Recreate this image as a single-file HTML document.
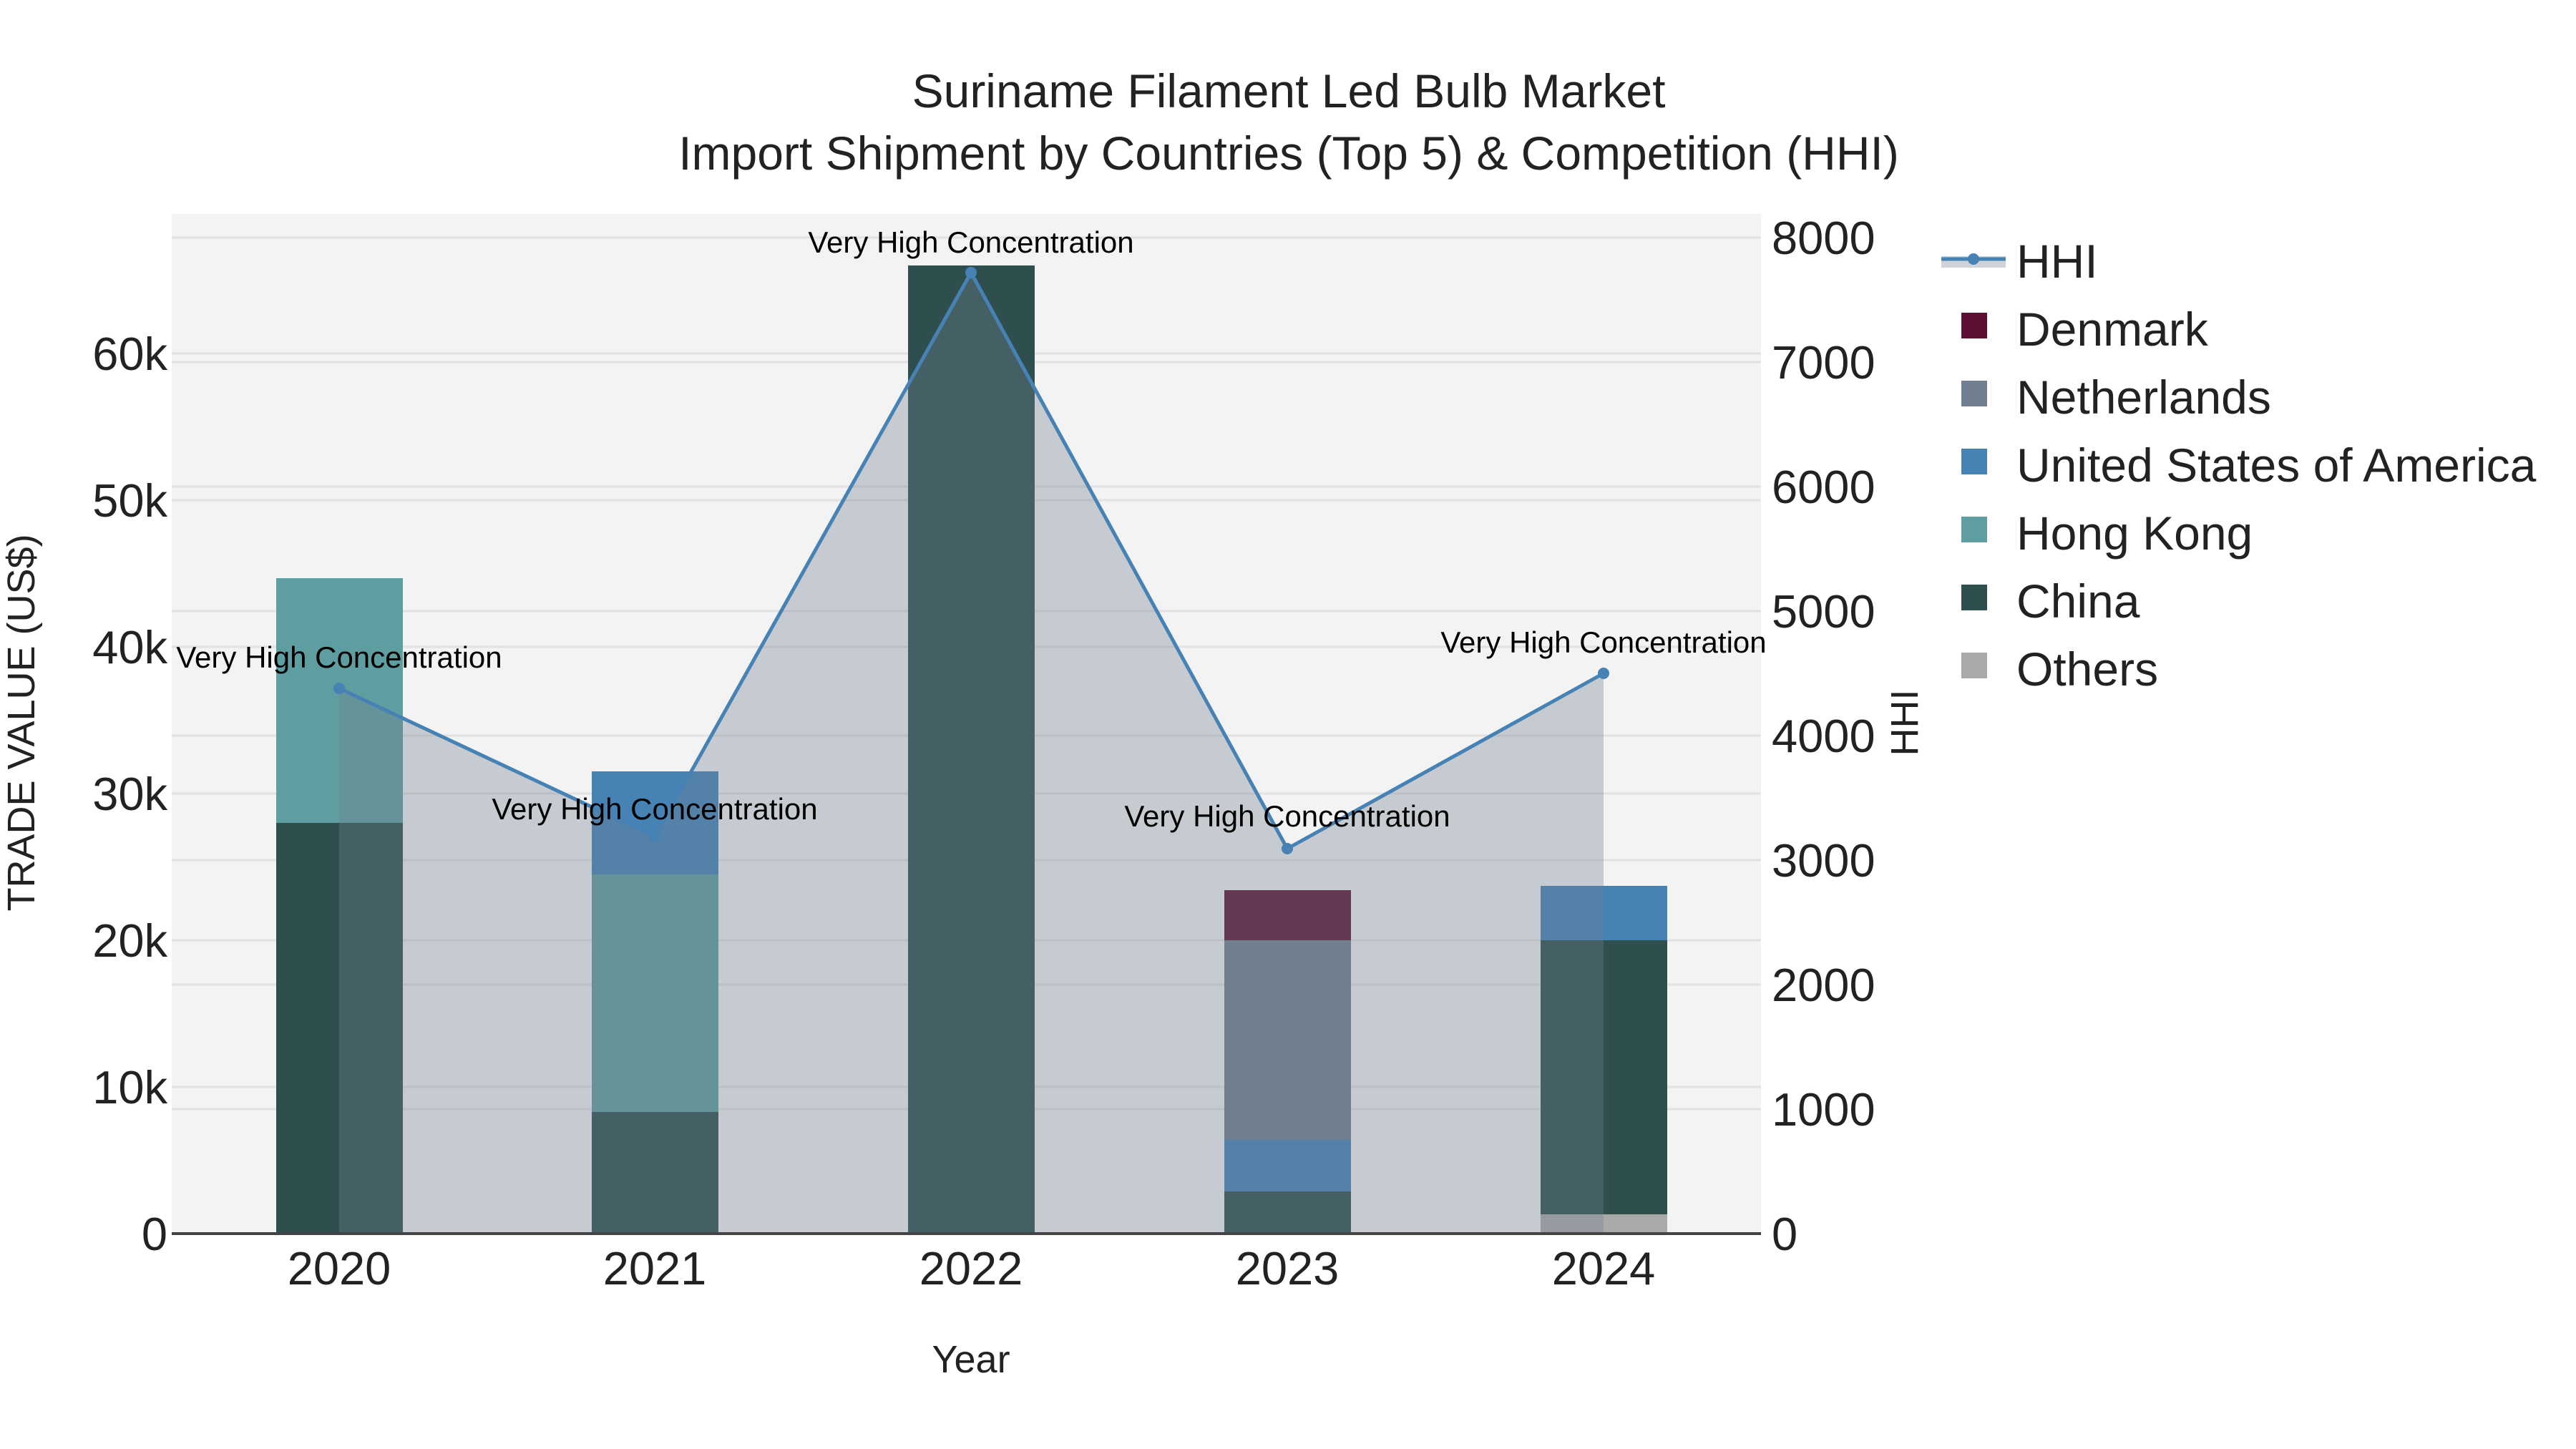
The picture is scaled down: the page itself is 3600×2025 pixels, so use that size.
<!DOCTYPE html>
<html><head><meta charset="utf-8"><style>
html,body{margin:0;padding:0;background:#fff;}
svg{display:block;font-family:"Liberation Sans",sans-serif;}
</style></head><body>
<svg width="3600" height="2025" viewBox="0 0 3600 2025" xmlns="http://www.w3.org/2000/svg">
<rect x="240" y="299" width="2221" height="1425" fill="#f3f3f3"/>
<g stroke="#e2e2e2" stroke-width="3">
<line x1="240" x2="2461" y1="1519" y2="1519"/><line x1="240" x2="2461" y1="1314" y2="1314"/>
<line x1="240" x2="2461" y1="1109" y2="1109"/><line x1="240" x2="2461" y1="904" y2="904"/>
<line x1="240" x2="2461" y1="699" y2="699"/><line x1="240" x2="2461" y1="494" y2="494"/>
<line x1="240" x2="2461" y1="1550" y2="1550"/><line x1="240" x2="2461" y1="1376" y2="1376"/>
<line x1="240" x2="2461" y1="1202" y2="1202"/><line x1="240" x2="2461" y1="1028" y2="1028"/>
<line x1="240" x2="2461" y1="854" y2="854"/><line x1="240" x2="2461" y1="680" y2="680"/>
<line x1="240" x2="2461" y1="506" y2="506"/><line x1="240" x2="2461" y1="332" y2="332"/>
</g>
<g>
<rect x="386" y="1150" width="177" height="574" fill="#2f4f4f"/>
<rect x="386" y="808" width="177" height="342" fill="#5f9ea0"/>
<rect x="827" y="1554" width="177" height="170" fill="#2f4f4f"/>
<rect x="827" y="1222" width="177" height="332" fill="#5f9ea0"/>
<rect x="827" y="1078" width="177" height="144" fill="#4682b4"/>
<rect x="1269" y="371" width="177" height="1353" fill="#2f4f4f"/>
<rect x="1711" y="1665" width="177" height="59" fill="#2f4f4f"/>
<rect x="1711" y="1593" width="177" height="72" fill="#4682b4"/>
<rect x="1711" y="1314" width="177" height="279" fill="#708090"/>
<rect x="1711" y="1244" width="177" height="70" fill="#5e1034"/>
<rect x="2153" y="1697" width="177" height="27" fill="#a9a9a9"/>
<rect x="2153" y="1314" width="177" height="383" fill="#2f4f4f"/>
<rect x="2153" y="1238" width="177" height="76" fill="#4682b4"/>
</g>
<polygon points="474,962 915,1169 1357,381 1799,1186 2241,941 2241,1724 474,1724" fill="#708090" fill-opacity="0.35"/>
<polyline points="474,962 915,1169 1357,381 1799,1186 2241,941" fill="none" stroke="#4682b4" stroke-width="5"/>
<g fill="#4682b4">
<circle cx="474" cy="962" r="8"/><circle cx="915" cy="1169" r="8"/><circle cx="1357" cy="381" r="8"/><circle cx="1799" cy="1186" r="8"/><circle cx="2241" cy="941" r="8"/>
</g>
<line x1="240" x2="2461" y1="1724" y2="1724" stroke="#444" stroke-width="4"/>
<g font-size="42" text-anchor="middle" fill="#000">
<text x="474" y="933">Very High Concentration</text>
<text x="915" y="1145">Very High Concentration</text>
<text x="1357" y="353">Very High Concentration</text>
<text x="1799" y="1155">Very High Concentration</text>
<text x="2241" y="912">Very High Concentration</text>
</g>
<g font-size="66" text-anchor="middle" fill="#222">
<text x="1801" y="150">Suriname Filament Led Bulb Market</text>
<text x="1801" y="237">Import Shipment by Countries (Top 5) &amp; Competition (HHI)</text>
</g>
<g font-size="65" text-anchor="end" fill="#222">
<text x="234" y="1747">0</text>
<text x="234" y="1542">10k</text>
<text x="234" y="1337">20k</text>
<text x="234" y="1132">30k</text>
<text x="234" y="927">40k</text>
<text x="234" y="722">50k</text>
<text x="234" y="517">60k</text>
</g>
<g font-size="65" fill="#222">
<text x="2476" y="1747">0</text>
<text x="2476" y="1573">1000</text>
<text x="2476" y="1399">2000</text>
<text x="2476" y="1225">3000</text>
<text x="2476" y="1051">4000</text>
<text x="2476" y="877">5000</text>
<text x="2476" y="703">6000</text>
<text x="2476" y="529">7000</text>
<text x="2476" y="355">8000</text>
</g>
<g font-size="65" text-anchor="middle" fill="#222">
<text x="474" y="1795">2020</text>
<text x="915" y="1795">2021</text>
<text x="1357" y="1795">2022</text>
<text x="1799" y="1795">2023</text>
<text x="2241" y="1795">2024</text>
</g>
<text x="1357" y="1918" font-size="54" text-anchor="middle" fill="#222">Year</text>
<text transform="translate(48,1010) rotate(-90)" font-size="54" text-anchor="middle" fill="#222">TRADE VALUE (US$)</text>
<text transform="translate(2680,1010) rotate(-90)" font-size="54" text-anchor="middle" fill="#222">HHI</text>
<rect x="2713" y="358" width="90" height="16" fill="#708090" fill-opacity="0.35"/>
<line x1="2713" x2="2803" y1="362" y2="362" stroke="#4682b4" stroke-width="5"/>
<circle cx="2758" cy="362" r="8" fill="#4682b4"/>
<g>
<rect x="2741" y="437" width="36" height="36" fill="#5e1034"/>
<rect x="2741" y="532" width="36" height="36" fill="#708090"/>
<rect x="2741" y="627" width="36" height="36" fill="#4682b4"/>
<rect x="2741" y="722" width="36" height="36" fill="#5f9ea0"/>
<rect x="2741" y="817" width="36" height="36" fill="#2f4f4f"/>
<rect x="2741" y="912" width="36" height="36" fill="#a9a9a9"/>
</g>
<g font-size="66" fill="#222">
<text x="2818" y="388">HHI</text>
<text x="2818" y="483">Denmark</text>
<text x="2818" y="578">Netherlands</text>
<text x="2818" y="673">United States of America</text>
<text x="2818" y="768">Hong Kong</text>
<text x="2818" y="863">China</text>
<text x="2818" y="958">Others</text>
</g>
</svg>
</body></html>
